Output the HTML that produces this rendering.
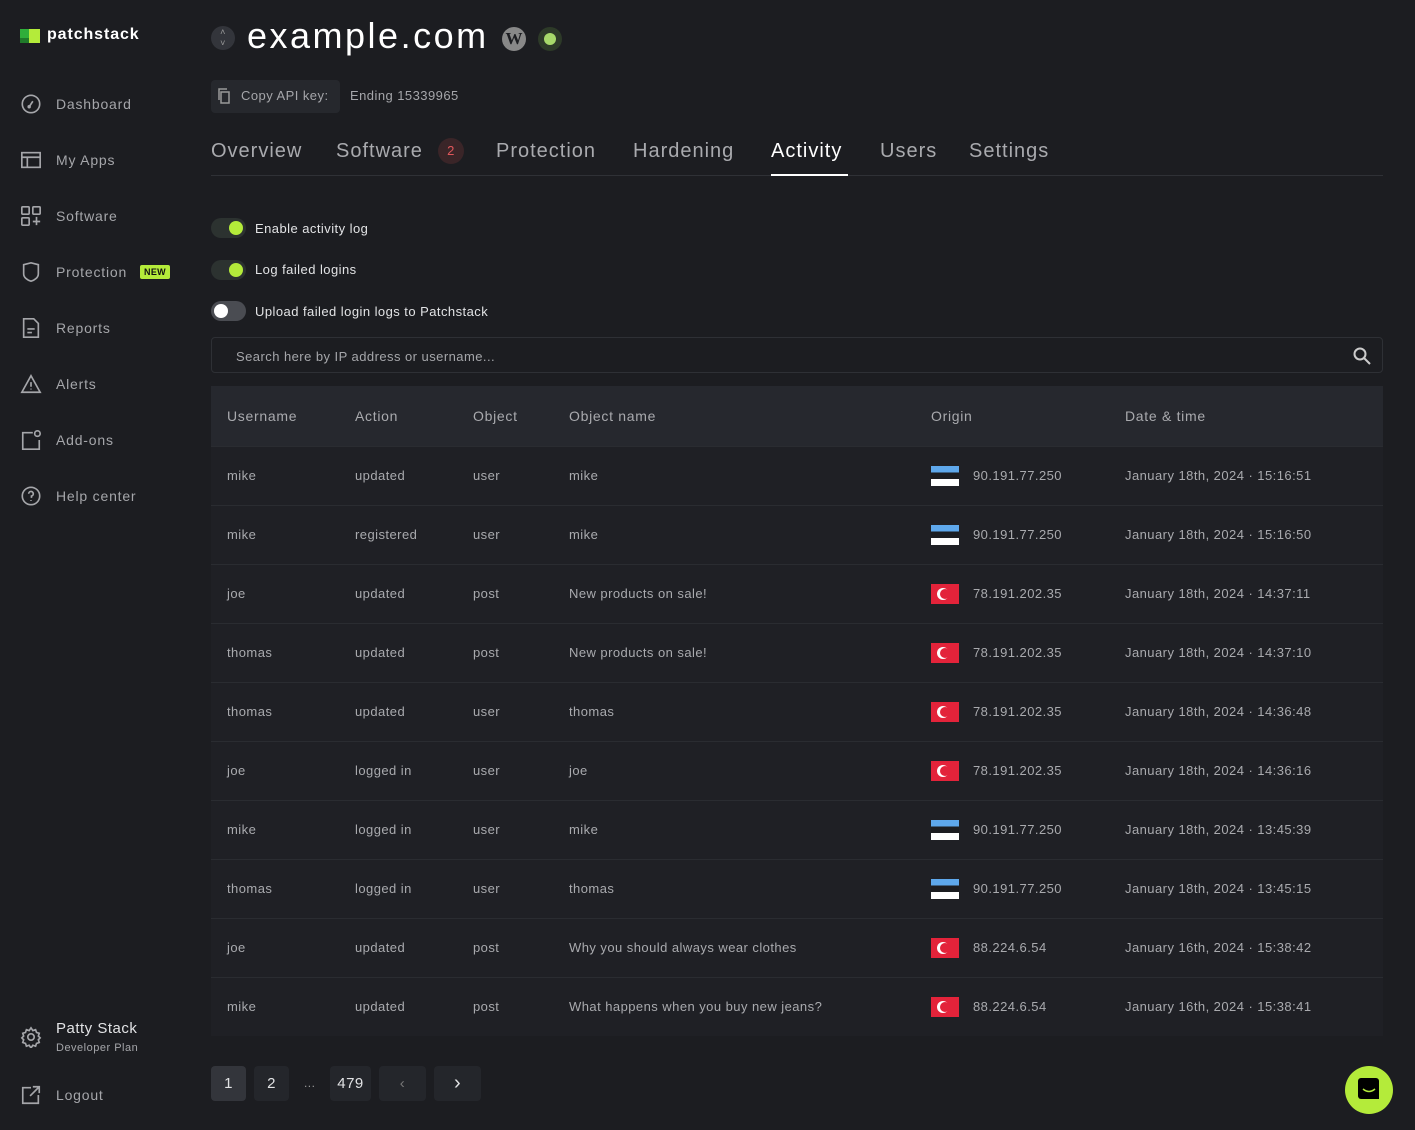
<!DOCTYPE html>
<html><head><meta charset="utf-8"><style>
*{box-sizing:border-box;margin:0;padding:0}
body{width:1415px;height:1130px;background:#1c1d21;font-family:"Liberation Sans",sans-serif;color:#b9babd;position:relative;overflow:hidden;letter-spacing:0.45px}
.abs{position:absolute}
.nav{position:absolute;left:20px;display:flex;align-items:center;font-size:14px;color:#a5a6aa;letter-spacing:0.8px}
.nav svg{width:22px;height:22px;margin-right:14px;stroke:#a5a6aa;fill:none;stroke-width:1.8}
.tab{position:absolute;top:140px;font-size:20px;color:#a9aaae;letter-spacing:1px}
.tog{position:absolute;left:211px;width:35px;height:20px;border-radius:10px;background:#2c3230}
.tog i{position:absolute;top:3px;width:14px;height:14px;border-radius:50%}
.tl{position:absolute;left:255px;font-size:13px;color:#e2e3e5}
table{position:absolute;left:211px;top:386px;width:1172px;border-collapse:collapse;font-size:13px;background:#1f2025}
th{background:#26282e;height:60px;text-align:left;font-weight:normal;font-size:14px;color:#a9aaae;padding-left:16px;letter-spacing:0.7px}
td{height:59px;border-top:1px solid #2a2c31;padding-left:16px;color:#a9aaae}
.o{display:flex;align-items:center;height:20px}
.ee,.tr{display:inline-block;width:28px;height:20px;margin-right:14px;flex:none}
.ee{background:linear-gradient(#5ea8ec 0 33%,#1c1d21 33% 66%,#fff 66%)}
.tr{background:#e3233a;position:relative}
.tr::before{content:"";position:absolute;left:6px;top:4px;width:12px;height:12px;border-radius:50%;background:#fff}
.tr::after{content:"";position:absolute;left:9px;top:5px;width:10px;height:10px;border-radius:50%;background:#e3233a}
.pg{position:absolute;top:1066px;height:35px;border-radius:4px;background:#24262b;color:#e2e3e5;font-size:15px;display:flex;align-items:center;justify-content:center}
</style></head><body>
<div class="abs" style="left:20px;top:29px;width:20px;height:14px">
<div class="abs" style="left:0;top:0;width:10px;height:9px;background:#2fae3a"></div>
<div class="abs" style="left:9px;top:0;width:11px;height:14px;background:#b4eb3a"></div>
<div class="abs" style="left:0;top:9px;width:9px;height:5px;background:#207a2a"></div></div>
<div class="abs" style="left:47px;top:26px;font-size:16px;font-weight:bold;color:#fff;letter-spacing:0.9px">patchstack</div>

<div class="nav" style="top:93px"><svg viewBox="0 0 24 24"><circle cx="12" cy="12" r="9.5"/><path d="M10 15l4-6"/><circle cx="10" cy="15" r="1"/></svg>Dashboard</div>
<div class="nav" style="top:149px"><svg viewBox="0 0 24 24"><rect x="2" y="4" width="20" height="16"/><path d="M2 9h20M8 9v11"/></svg>My Apps</div>
<div class="nav" style="top:205px"><svg viewBox="0 0 24 24"><rect x="2" y="2" width="8" height="8" rx="1"/><rect x="14" y="2" width="8" height="8" rx="1"/><rect x="2" y="14" width="8" height="8" rx="1"/><path d="M18 13v9M14 18h8"/></svg>Software</div>
<div class="nav" style="top:261px"><svg viewBox="0 0 24 24"><path d="M4 4l8-2 8 2v10c0 4-4 7-8 8-4-1-8-4-8-8z"/></svg>Protection<span style="margin-left:13px;background:#b4eb3a;color:#111;font-size:9px;font-weight:bold;padding:2px 4px;border-radius:2px;letter-spacing:0.3px">NEW</span></div>
<div class="nav" style="top:317px"><svg viewBox="0 0 24 24"><path d="M4 2h11l5 5v15H4z M8 13h8M8 17h5"/></svg>Reports</div>
<div class="nav" style="top:373px"><svg viewBox="0 0 24 24"><path d="M12 3l10 18H2z M12 10v5M12 17v1"/></svg>Alerts</div>
<div class="nav" style="top:429px"><svg viewBox="0 0 24 24"><path d="M14 4H3v18h18V12"/><circle cx="19" cy="5" r="3"/></svg>Add-ons</div>
<div class="nav" style="top:485px"><svg viewBox="0 0 24 24"><circle cx="12" cy="12" r="9.5"/><path d="M9.5 9.5a2.5 2.5 0 1 1 3 2.5v2M12 16.5v1"/></svg>Help center</div>
<div class="nav" style="top:1020px;align-items:flex-start"><svg viewBox="0 0 24 24" style="margin-top:6px"><circle cx="12" cy="12" r="3.5"/><path d="M12 2l2 3 3-1 1 3 3 1-1 3 2 2-2 2 1 3-3 1-1 3-3-1-2 3-2-3-3 1-1-3-3-1 1-3-2-2 2-2-1-3 3-1 1-3 3 1z"/></svg><div><div style="color:#e2e3e5;font-size:15px;letter-spacing:0.5px">Patty Stack</div><div style="font-size:11px;margin-top:5px;letter-spacing:0.5px">Developer Plan</div></div></div>
<div class="nav" style="top:1084px"><svg viewBox="0 0 24 24"><path d="M12 4H3v17h17v-9M14 3h7v7M21 3L11 13"/></svg>Logout</div>

<div class="abs" style="left:211px;top:26px;width:24px;height:24px;border-radius:50%;background:#33353b;color:#999;font-size:9px;text-align:center;line-height:11px;padding-top:1px">˄<br>˅</div>
<div class="abs" style="left:247px;top:15px;font-size:36px;color:#fff;letter-spacing:2.5px">example.com</div>
<div class="abs" style="left:502px;top:27px;width:24px;height:24px;border-radius:50%;background:#888;color:#1c1d21;font-weight:bold;font-family:'Liberation Serif',serif;font-size:17px;text-align:center;line-height:24px;letter-spacing:0">W</div>
<div class="abs" style="left:538px;top:27px;width:24px;height:24px;border-radius:50%;background:#2d3a28"><div class="abs" style="left:6px;top:6px;width:12px;height:12px;border-radius:50%;background:#a6d86a"></div></div>

<div class="abs" style="left:211px;top:80px;width:129px;height:33px;border-radius:4px;background:#26282d;font-size:13px;color:#a5a6aa;padding:8px 0 0 30px">Copy API key:</div>
<svg class="abs" style="left:217px;top:88px" width="14" height="16" viewBox="0 0 14 16" fill="none" stroke="#999" stroke-width="1.5"><path d="M4 4h8v11H4z M2 12V1h8"/></svg>
<div class="abs" style="left:350px;top:88px;font-size:13px;color:#a5a6aa">Ending 15339965</div>

<div class="tab" style="left:211px">Overview</div>
<div class="tab" style="left:336px">Software</div>
<div class="abs" style="left:438px;top:138px;width:26px;height:26px;border-radius:50%;background:#3a2528;color:#e0575b;font-size:13px;text-align:center;line-height:26px">2</div>
<div class="tab" style="left:496px">Protection</div>
<div class="tab" style="left:633px">Hardening</div>
<div class="tab" style="left:771px;color:#fff">Activity</div>
<div class="tab" style="left:880px">Users</div>
<div class="tab" style="left:969px">Settings</div>
<div class="abs" style="left:211px;top:175px;width:1172px;height:1px;background:#2f3136"></div>
<div class="abs" style="left:771px;top:174px;width:77px;height:2px;background:#fff"></div>

<div class="tog" style="top:218px"><i style="left:18px;background:#b4eb3a"></i></div><div class="tl" style="top:221px">Enable activity log</div>
<div class="tog" style="top:260px"><i style="left:18px;background:#b4eb3a"></i></div><div class="tl" style="top:262px">Log failed logins</div>
<div class="tog" style="top:301px;background:#4a4c52"><i style="left:3px;background:#fff"></i></div><div class="tl" style="top:304px">Upload failed login logs to Patchstack</div>

<div class="abs" style="left:211px;top:337px;width:1172px;height:36px;border:1px solid #2e3035;border-radius:4px;font-size:13px;color:#a5a6aa;padding:11px 0 0 24px">Search here by IP address or username...</div>
<svg class="abs" style="left:1353px;top:347px" width="18" height="18" viewBox="0 0 18 18" fill="none" stroke="#ccc" stroke-width="2"><circle cx="7" cy="7" r="5.5"/><path d="M11 11l6 6"/></svg>

<table>
<tr><th style="width:128px">Username</th><th style="width:118px">Action</th><th style="width:96px">Object</th><th style="width:362px">Object name</th><th style="width:194px">Origin</th><th>Date &amp; time</th></tr>
<tr><td>mike</td><td>updated</td><td>user</td><td>mike</td><td><div class="o"><span class="ee"></span>90.191.77.250</div></td><td>January 18th, 2024 · 15:16:51</td></tr>
<tr><td>mike</td><td>registered</td><td>user</td><td>mike</td><td><div class="o"><span class="ee"></span>90.191.77.250</div></td><td>January 18th, 2024 · 15:16:50</td></tr>
<tr><td>joe</td><td>updated</td><td>post</td><td>New products on sale!</td><td><div class="o"><span class="tr"></span>78.191.202.35</div></td><td>January 18th, 2024 · 14:37:11</td></tr>
<tr><td>thomas</td><td>updated</td><td>post</td><td>New products on sale!</td><td><div class="o"><span class="tr"></span>78.191.202.35</div></td><td>January 18th, 2024 · 14:37:10</td></tr>
<tr><td>thomas</td><td>updated</td><td>user</td><td>thomas</td><td><div class="o"><span class="tr"></span>78.191.202.35</div></td><td>January 18th, 2024 · 14:36:48</td></tr>
<tr><td>joe</td><td>logged in</td><td>user</td><td>joe</td><td><div class="o"><span class="tr"></span>78.191.202.35</div></td><td>January 18th, 2024 · 14:36:16</td></tr>
<tr><td>mike</td><td>logged in</td><td>user</td><td>mike</td><td><div class="o"><span class="ee"></span>90.191.77.250</div></td><td>January 18th, 2024 · 13:45:39</td></tr>
<tr><td>thomas</td><td>logged in</td><td>user</td><td>thomas</td><td><div class="o"><span class="ee"></span>90.191.77.250</div></td><td>January 18th, 2024 · 13:45:15</td></tr>
<tr><td>joe</td><td>updated</td><td>post</td><td>Why you should always wear clothes</td><td><div class="o"><span class="tr"></span>88.224.6.54</div></td><td>January 16th, 2024 · 15:38:42</td></tr>
<tr><td>mike</td><td>updated</td><td>post</td><td>What happens when you buy new jeans?</td><td><div class="o"><span class="tr"></span>88.224.6.54</div></td><td>January 16th, 2024 · 15:38:41</td></tr>
</table>

<div class="pg" style="left:211px;width:35px;background:#33353b">1</div>
<div class="pg" style="left:254px;width:35px">2</div>
<div class="abs" style="left:304px;top:1076px;font-size:12px;color:#999">...</div>
<div class="pg" style="left:330px;width:41px">479</div>
<div class="pg" style="left:379px;width:47px;color:#777">‹</div>
<div class="pg" style="left:434px;width:47px;font-size:20px">›</div>

<div class="abs" style="left:1345px;top:1066px;width:48px;height:48px;border-radius:50%;background:#b4eb3a">
<div class="abs" style="left:13px;top:12px;width:21px;height:21px;border-radius:3px 3px 0 3px;background:#000"></div>
<svg class="abs" style="left:17px;top:22px" width="14" height="6" viewBox="0 0 14 6"><path d="M1 1q6 5 12 0" stroke="#b4eb3a" stroke-width="1.5" fill="none"/></svg></div>
</body></html>
